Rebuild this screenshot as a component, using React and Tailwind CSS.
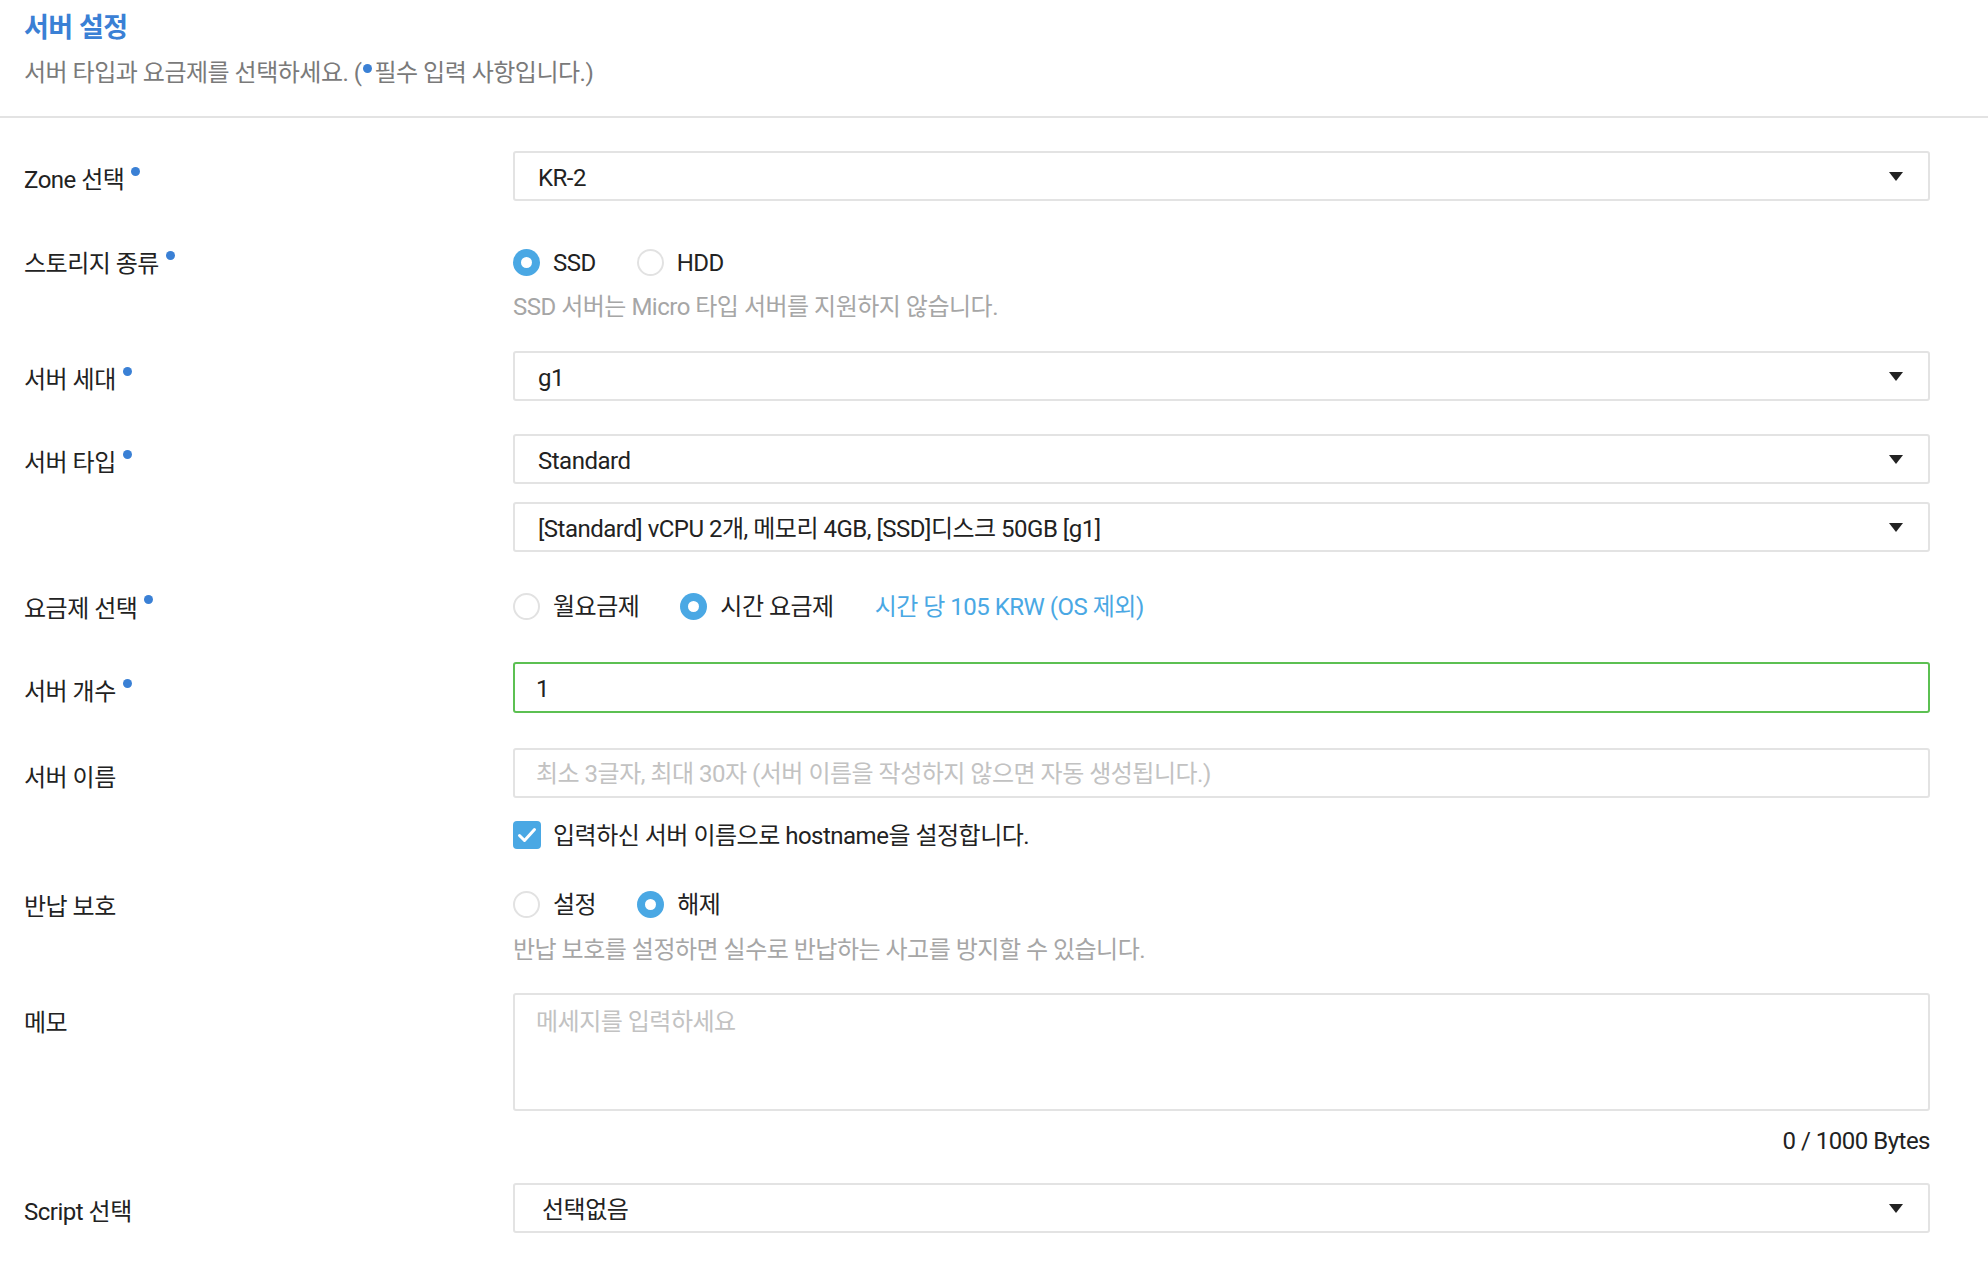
import { useState } from "react";

// Server settings form: one label column, one control column.
const BLUE = "bg-[#4aa8e4]";

function Dot({ small }) {
  return (
    <span
      className={
        small
          ? "mx-[2px] inline-block h-[9px] w-[9px] -translate-y-[8px] rounded-full bg-[#3a80d5]"
          : "ml-[7px] inline-block h-[9px] w-[9px] -translate-y-[9px] rounded-full bg-[#3a80d5]"
      }
    />
  );
}

function Caret() {
  return (
    <svg width="14" height="9" viewBox="0 0 14 9" className="shrink-0">
      <path d="M0 0h14L7 9z" fill="#222" />
    </svg>
  );
}

function Select({ value, indent }) {
  return (
    <div
      className={`flex h-[50px] items-center justify-between rounded-[3px] border-2 border-[#e3e3e3] pr-[25px] text-[#222] ${
        indent ? "pl-[27px]" : "pl-[23px]"
      }`}
    >
      <span className="pt-[3px]">{value}</span>
      <Caret />
    </div>
  );
}

function Radio({ checked, label, onClick }) {
  return (
    <button type="button" onClick={onClick} className="mr-[41px] flex items-center">
      {checked ? (
        <span className={`flex h-[27px] w-[27px] items-center justify-center rounded-full ${BLUE}`}>
          <span className="h-[11px] w-[11px] rounded-full bg-white" />
        </span>
      ) : (
        <span className="h-[27px] w-[27px] rounded-full border-2 border-[#e2e2e2] bg-white" />
      )}
      <span className="ml-[13px] pt-[2px] text-[#222]">{label}</span>
    </button>
  );
}

function Row({ label, required, labelH = "h-[50px] pt-[8px]", className = "", children }) {
  return (
    <div className={`flex ${className}`}>
      <div className={`flex w-[489px] shrink-0 items-center text-[#222] ${labelH}`}>
        <span>{label}</span>
        {required && <Dot />}
      </div>
      <div className="min-w-0 flex-1">{children}</div>
    </div>
  );
}

export default function App() {
  const [storage, setStorage] = useState("ssd");
  const [plan, setPlan] = useState("hour");
  const [protect, setProtect] = useState("off");
  const [hostname, setHostname] = useState(true);

  return (
    <div
      className="min-h-screen w-full bg-white text-[24px] leading-[34px] tracking-[-0.5px] text-[#222]"
      style={{ fontFamily: 'Roboto, "Noto Sans CJK KR", sans-serif' }}
    >
      <div className="px-[24px] pt-[10px]">
        <h1 className="h-[36px] text-[27px] font-bold leading-[36px] text-[#3a80d5]">서버 설정</h1>
        <p className="mt-[10px] text-[#7a7a7a]">
          서버 타입과 요금제를 선택하세요. (<Dot small />필수 입력 사항입니다.)
        </p>
      </div>
      <div className="mt-[26px] h-[2px] w-full bg-[#e3e3e3]" />

      <div className="pl-[24px] pr-[58px]">
        <Row label="Zone 선택" required className="mt-[33px]">
          <Select value="KR-2" />
        </Row>

        <Row label="스토리지 종류" required labelH="h-[36px] pt-[4px]" className="mt-[43px]">
          <div className="flex h-[36px] items-center">
            <Radio checked={storage === "ssd"} label="SSD" onClick={() => setStorage("ssd")} />
            <Radio checked={storage === "hdd"} label="HDD" onClick={() => setStorage("hdd")} />
          </div>
          <p className="mt-[10px] text-[#a6a6a6]">SSD 서버는 Micro 타입 서버를 지원하지 않습니다.</p>
        </Row>

        <Row label="서버 세대" required className="mt-[27px]">
          <Select value="g1" />
        </Row>

        <Row label="서버 타입" required className="mt-[33px]">
          <Select value="Standard" />
          <div className="mt-[18px]">
            <Select value="[Standard] vCPU 2개, 메모리 4GB, [SSD]디스크 50GB [g1]" />
          </div>
        </Row>

        <Row label="요금제 선택" required labelH="h-[36px] pt-[5px]" className="mt-[36px]">
          <div className="flex h-[36px] items-center">
            <Radio checked={plan === "month"} label="월요금제" onClick={() => setPlan("month")} />
            <Radio checked={plan === "hour"} label="시간 요금제" onClick={() => setPlan("hour")} />
            <span className="pt-[1px] text-[#4aa8e4]">시간 당 105 KRW (OS 제외)</span>
          </div>
        </Row>

        <Row label="서버 개수" required labelH="h-[50px] pt-[10px]" className="mt-[38px]">
          <div className="flex h-[51px] items-center rounded-[3px] border-2 border-[#5cc052] pl-[21px] pt-[3px] text-[#222]">
            1
          </div>
        </Row>

        <Row label="서버 이름" labelH="h-[50px] pt-[9px]" className="mt-[35px]">
          <div className="flex h-[50px] items-center rounded-[3px] border-2 border-[#e3e3e3] pl-[21px] pt-[2px] text-[#c2c2c2]">
            최소 3글자, 최대 30자 (서버 이름을 작성하지 않으면 자동 생성됩니다.)
          </div>
          <button
            type="button"
            onClick={() => setHostname(!hostname)}
            className="mt-[19px] flex h-[36px] items-center"
          >
            <span
              className={`flex h-[28px] w-[28px] items-center justify-center rounded-[4px] ${
                hostname ? BLUE : "border-2 border-[#e2e2e2]"
              }`}
            >
              {hostname && (
                <svg width="28" height="28" viewBox="0 0 28 28">
                  <polyline
                    points="6.5,14.5 11.5,19.5 21.5,8.5"
                    fill="none"
                    stroke="#fff"
                    strokeWidth="3"
                    strokeLinecap="round"
                    strokeLinejoin="round"
                  />
                </svg>
              )}
            </span>
            <span className="ml-[12px] pt-[2px]">입력하신 서버 이름으로 hostname을 설정합니다.</span>
          </button>
        </Row>

        <Row label="반납 보호" labelH="h-[36px] pt-[5px]" className="mt-[33px]">
          <div className="flex h-[36px] items-center">
            <Radio checked={protect === "on"} label="설정" onClick={() => setProtect("on")} />
            <Radio checked={protect === "off"} label="해제" onClick={() => setProtect("off")} />
          </div>
          <p className="mt-[11px] text-[#a6a6a6]">반납 보호를 설정하면 실수로 반납하는 사고를 방지할 수 있습니다.</p>
        </Row>

        <Row label="메모" labelH="h-[56px] pt-[3px]" className="mt-[26px]">
          <div className="h-[118px] rounded-[3px] border-2 border-[#e3e3e3] pl-[21px] pt-[10px] text-[#c2c2c2]">
            메세지를 입력하세요
          </div>
          <p className="mt-[13px] text-right">0 / 1000 Bytes</p>
        </Row>

        <Row label="Script 선택" labelH="h-[50px] pt-[8px]" className="mt-[25px]">
          <Select value="선택없음" indent />
        </Row>
      </div>
    </div>
  );
}
